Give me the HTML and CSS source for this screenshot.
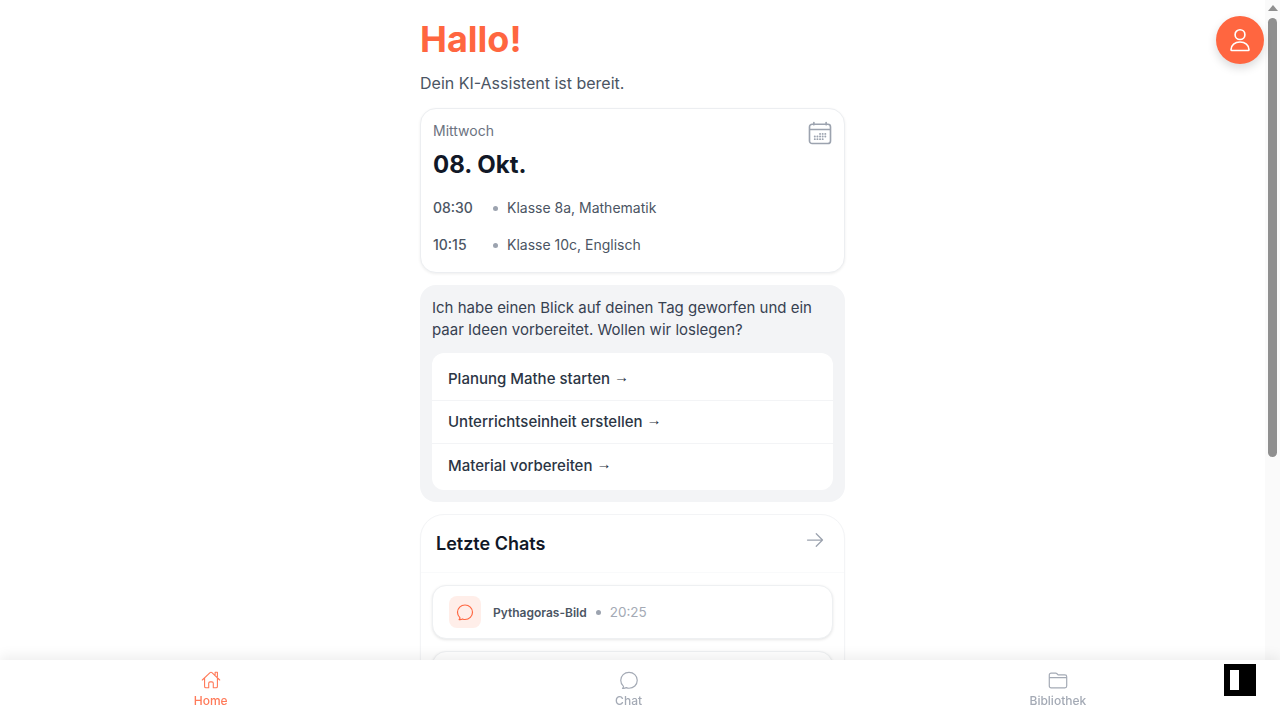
FILE: index.html
```html
<!DOCTYPE html>
<html lang="de">
<head>
    <meta charset="UTF-8">
    <meta name="viewport" content="width=device-width, initial-scale=1.0">
    <title>Home</title>
    <link rel="stylesheet" href="styles.css">
</head>
<body>
    <div class="scroller">
        <main class="column">
            <h1 class="hello">Hallo!</h1>
            <p class="subtitle">Dein KI-Assistent ist bereit.</p>

            <section class="day-card">
                <div class="day-head">
                    <div>
                        <p class="weekday">Mittwoch</p>
                        <h2 class="date">08. Okt.</h2>
                    </div>
                    <svg class="calendar-icon" viewBox="0 0 24 24" fill="none" stroke="currentColor" stroke-width="1.4" stroke-linecap="round" stroke-linejoin="round"><path d="M6.75 3v2M17.25 3v2M5.25 4.5h13.5A2.25 2.25 0 0 1 21 6.75v12A2.25 2.25 0 0 1 18.75 21H5.25A2.25 2.25 0 0 1 3 18.75v-12A2.25 2.25 0 0 1 5.25 4.5ZM3 9h18"/><path stroke-width="1.6" d="M12 12.75h.1M12 15h.1M12 17.25h.1M9.75 15h.1M9.75 17.25h.1M7.5 15h.1M7.5 17.25h.1M14.25 12.75h.1M14.25 15h.1M14.25 17.25h.1M16.5 12.75h.1M16.5 15h.1"/></svg>
                </div>
                <div class="lesson">
                    <span class="lesson-time">08:30</span>
                    <span class="dot"></span>
                    <span>Klasse 8a, Mathematik</span>
                </div>
                <div class="lesson">
                    <span class="lesson-time">10:15</span>
                    <span class="dot"></span>
                    <span>Klasse 10c, Englisch</span>
                </div>
            </section>

            <section class="ideas">
                <p class="ideas-text">Ich habe einen Blick auf deinen Tag geworfen und ein paar Ideen vorbereitet. Wollen wir loslegen?</p>
                <div class="ideas-list">
                    <a class="idea" href="#">Planung Mathe starten <span class="idea-arrow">→</span></a>
                    <a class="idea" href="#">Unterrichtseinheit erstellen <span class="idea-arrow">→</span></a>
                    <a class="idea" href="#">Material vorbereiten <span class="idea-arrow">→</span></a>
                </div>
            </section>

            <section class="chats">
                <div class="chats-head">
                    <h2 class="chats-title">Letzte Chats</h2>
                    <svg class="chats-arrow" viewBox="0 0 24 24" fill="none" stroke="currentColor" stroke-width="1.5" stroke-linecap="round" stroke-linejoin="round"><path d="M13.5 4.5 21 12m0 0-7.5 7.5M21 12H3"/></svg>
                </div>
                <div class="chats-list">
                    <div class="chat">
                        <span class="chat-icon">
                            <svg viewBox="0 0 24 24" fill="none" stroke="currentColor" stroke-width="1.4" stroke-linecap="round" stroke-linejoin="round"><path d="M12 21c5 0 9-3.8 9-8.700S17 3.600 12 3.600 3 7.400 3 12.300c0 2.500 1 4.800 2.800 6.400.3.3.3.8 0 1.200l-.9 1.200c1.500.2 3-.1 4.200-.8.900.4 1.900.7 2.900.7Z"/></svg>
                        </span>
                        <span class="chat-name">Pythagoras-Bild</span>
                        <span class="dot"></span>
                        <span class="chat-time">20:25</span>
                    </div>
                    <div class="chat">
                        <span class="chat-icon">
                            <svg viewBox="0 0 24 24" fill="none" stroke="currentColor" stroke-width="1.4" stroke-linecap="round" stroke-linejoin="round"><path d="M12 21c5 0 9-3.8 9-8.700S17 3.600 12 3.600 3 7.400 3 12.300c0 2.500 1 4.800 2.800 6.400.3.3.3.8 0 1.200l-.9 1.200c1.500.2 3-.1 4.200-.8.900.4 1.900.7 2.900.7Z"/></svg>
                        </span>
                    </div>
                </div>
            </section>
        </main>
    </div>

    <div class="scrollbar">
        <span class="scroll-up"></span>
        <span class="scroll-thumb"></span>
    </div>

    <button class="profile" aria-label="Profil">
        <svg viewBox="0 0 24 24" fill="none" stroke="currentColor" stroke-width="1.4" stroke-linecap="round" stroke-linejoin="round"><circle cx="12" cy="7.4" r="4.2"/><path d="M4.3 20.3c0-4 3.3-6.6 7.7-6.6s7.7 2.6 7.7 6.6c0 .4-.3.7-.7.7H5c-.4 0-.7-.3-.7-.7Z"/></svg>
    </button>

    <nav class="tabbar">
        <a class="tab tab-active" href="#">
            <svg viewBox="0 0 24 24" fill="none" stroke="currentColor" stroke-width="1.2" stroke-linecap="round" stroke-linejoin="round"><path d="M2.5 12 11 4a1.5 1.5 0 0 1 2 0l8.500 8M5 9.800V19a1.500 1.500 0 0 0 1.500 1.500h3v-5a1.500 1.500 0 0 1 1.500-1.500h2a1.500 1.500 0 0 1 1.500 1.500v5h3A1.500 1.500 0 0 0 19 19V9.800M16.500 6V3.500H19v4.800"/></svg>
            <span>Home</span>
        </a>
        <a class="tab" href="#">
            <svg viewBox="0 0 24 24" fill="none" stroke="currentColor" stroke-width="1.3" stroke-linecap="round" stroke-linejoin="round"><path d="M12 21c5 0 9-3.800 9-8.700S17 3.600 12 3.600 3 7.400 3 12.300c0 2.500 1 4.800 2.800 6.400.3.3.3.8 0 1.200l-.9 1.200c1.500.2 3-.1 4.200-.8.900.4 1.900.7 2.900.7Z"/></svg>
            <span>Chat</span>
        </a>
        <a class="tab" href="#">
            <svg viewBox="0 0 24 24" fill="none" stroke="currentColor" stroke-width="1.3" stroke-linecap="round" stroke-linejoin="round"><path d="M2.500 9.500h19M4.500 4.500h5a1.500 1.500 0 0 1 1.100.4l1.500 1.600h7.400a2 2 0 0 1 2 2v10a2 2 0 0 1-2 2h-15a2 2 0 0 1-2-2v-12a2 2 0 0 1 2-2Z"/></svg>
            <span>Bibliothek</span>
        </a>
    </nav>

    <div class="corner-badge"><span class="corner-bar"></span></div>
</body>
</html>
```

FILE: styles.css
```css
body{
    font-family: Inter, "Noto Sans", sans-serif;
    background-color: #fff;
    color: #111827;
    margin: 0;
    height: 100vh;
    overflow: hidden;
    display: flex;
}
a{
    color: inherit;
    text-decoration: none;
}
h1, h2, p{
    margin: 0;
}
.scroller{
    flex: 1;
    height: 100vh;
    overflow: hidden;
}
.scrollbar{
    width: 15px;
    height: 100vh;
    background-color: #fafafa;
    display: flex;
    flex-direction: column;
    align-items: center;
}
.scroll-up{
    width: 0;
    height: 0;
    margin-top: 5px;
    border-left: 5px solid transparent;
    border-right: 5px solid transparent;
    border-bottom: 6px solid #8f8f8f;
}
.scroll-thumb{
    width: 9px;
    height: 439px;
    margin-top: 7px;
    background-color: #8f8f8f;
    border-radius: 5px;
}
.column{
    width: 425px;
    margin: 0 auto;
    padding: 16px 0 80px;
}
.hello{
    font-size: 36px;
    line-height: 46px;
    font-weight: 700;
    color: #ff6640;
}
.subtitle{
    font-size: 16px;
    line-height: 24px;
    color: #4b5563;
    margin-top: 9px;
}

.day-card{
    margin-top: 13px;
    height: 165px;
    box-sizing: border-box;
    padding: 12px;
    background-color: #fff;
    border: 1px solid #eceef1;
    border-radius: 16px;
    box-shadow: 0 1px 3px rgba(0, 0, 0, 0.07);
}
.day-head{
    display: flex;
    justify-content: space-between;
    align-items: flex-start;
    margin-bottom: 17px;
}
.weekday{
    font-size: 14px;
    line-height: 20px;
    color: #6b7280;
}
.date{
    font-size: 24px;
    line-height: 32px;
    font-weight: 700;
    margin-top: 8px;
}
.calendar-icon{
    width: 28px;
    height: 28px;
    color: #9ca3af;
    margin: -2px -2px 0 0;
}
.lesson{
    display: flex;
    align-items: center;
    font-size: 14px;
    line-height: 20px;
    color: #4b5563;
    margin-bottom: 17px;
}
.lesson-time{
    width: 60px;
    font-weight: 500;
    color: #4b5563;
}
.dot{
    width: 5px;
    height: 5px;
    border-radius: 50%;
    background-color: #9ca3af;
    flex-shrink: 0;
}
.lesson .dot{
    margin-right: 9px;
}

.ideas{
    margin-top: 12px;
    padding: 12px;
    background-color: #f3f4f6;
    border-radius: 16px;
}
.ideas-text{
    font-size: 15px;
    line-height: 22px;
    color: #374151;
}
.ideas-list{
    margin-top: 12px;
    padding: 5px 0 3px;
    background-color: #fff;
    border-radius: 12px;
    overflow: hidden;
}
.idea{
    display: block;
    height: 42px;
    box-sizing: content-box;
    padding: 0 16px;
    font-size: 15px;
    line-height: 42px;
    font-weight: 500;
    color: #2b3544;
    border-bottom: 1px solid #f3f4f6;
}
.idea:last-child{
    padding-top: 1px;
    border-bottom: none;
}
.idea-arrow{
    font-family: "Liberation Sans", sans-serif;
    font-weight: 400;
    line-height: 1;
    vertical-align: 2px;
}

.chats{
    margin-top: 12px;
    background-color: #fff;
    border: 1px solid #f3f4f6;
    border-radius: 24px;
    box-shadow: 0 1px 2px rgba(0, 0, 0, 0.03);
}
.chats-head{
    display: flex;
    justify-content: space-between;
    align-items: center;
    height: 58px;
    box-sizing: border-box;
    padding: 0 20px 0 15px;
    border-bottom: 1px solid #f9fafb;
}
.chats-title{
    font-size: 18px;
    line-height: 28px;
    font-weight: 600;
}
.chats-arrow{
    width: 20px;
    height: 20px;
    color: #9ca3af;
    margin: -8px -1px 0 0;
}
.chats-list{
    padding: 12px 11px;
    display: flex;
    flex-direction: column;
    gap: 12px;
}
.chat{
    display: flex;
    align-items: center;
    height: 54px;
    box-sizing: border-box;
    padding: 0 16px;
    background-color: #fff;
    border: 1px solid #eef0f2;
    border-radius: 14px;
    box-shadow: 0 1px 3px rgba(0, 0, 0, 0.1);
}
.chat-icon{
    display: flex;
    align-items: center;
    justify-content: center;
    width: 32px;
    height: 32px;
    margin-right: 12px;
    border-radius: 8px;
    background-color: #ffeee9;
    color: #ff6640;
}
.chat-icon svg{
    width: 20px;
    height: 20px;
}
.chat-name{
    font-size: 12px;
    font-weight: 600;
    color: #4b5563;
}
.chat .dot{
    margin: 0 9px;
}
.chat-time{
    font-size: 13.5px;
    color: #a4aab5;
}

.profile{
    position: fixed;
    top: 16px;
    right: 16px;
    width: 48px;
    height: 48px;
    padding: 0;
    display: flex;
    align-items: center;
    justify-content: center;
    border: none;
    border-radius: 50%;
    background-color: #ff6640;
    color: #fff;
    box-shadow: 0 4px 10px rgba(0, 0, 0, 0.15);
}
.profile svg{
    width: 28px;
    height: 28px;
}

.tabbar{
    position: fixed;
    left: 0;
    right: 0;
    bottom: 0;
    height: 60px;
    box-sizing: border-box;
    padding-top: 9px;
    display: flex;
    justify-content: space-around;
    align-items: flex-start;
    background-color: #fff;
    box-shadow: 0 -4px 12px rgba(0, 0, 0, 0.07);
}
.tab{
    display: flex;
    flex-direction: column;
    align-items: center;
    font-size: 12px;
    line-height: 16px;
    font-weight: 500;
    color: #a4aab5;
}
.tab svg{
    width: 22px;
    height: 22px;
    margin-bottom: 2px;
}
.tab-active{
    color: #ff7a59;
}
.corner-badge{
    position: fixed;
    right: 24px;
    bottom: 24px;
    width: 32px;
    height: 32px;
    background-color: #000;
}
.corner-bar{
    position: absolute;
    left: 6px;
    top: 6px;
    width: 9px;
    height: 20px;
    background-color: #fff;
}
```
